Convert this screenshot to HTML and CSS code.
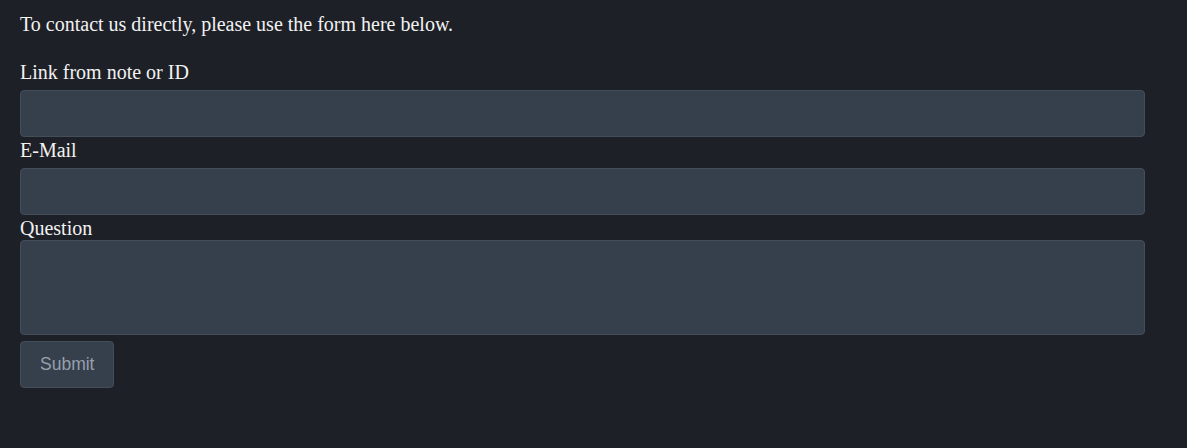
FILE: index.html
```html
<!DOCTYPE html>
<html lang="en">
<head>
<meta charset="utf-8">
<title>Contact</title>
<link rel="stylesheet" href="styles.css">
</head>
<body>
<div class="page">
  <p class="intro">To contact us directly, please use the form here below.</p>
  <form class="form">
    <label class="label" for="link">Link from note or ID</label>
    <input class="field" id="link" type="text">
    <label class="label" for="mail">E-Mail</label>
    <input class="field" id="mail" type="email">
    <label class="label label-tight" for="q">Question</label>
    <textarea class="field area" id="q"></textarea>
    <button class="submit" type="button">Submit</button>
  </form>
</div>
</body>
</html>
```
FILE: styles.css
```css
html, body {
  margin: 0;
  background: #1e2027;
}
.page {
  padding: 13px 42px 0 20px;
  font-family: "Liberation Serif", "Times New Roman", serif;
  font-size: 20px;
  line-height: 22px;
  color: #f2f2f2;
}
.intro {
  margin: 0 0 26px;
}
.form {
  display: flex;
  flex-direction: column;
  align-items: flex-start;
}
.label {
  display: block;
  margin: 0 0 7px;
}
.label-tight {
  margin-bottom: 1px;
}
.field {
  display: block;
  box-sizing: border-box;
  width: 100%;
  height: 47px;
  margin: 0 0 2px;
  background: #363f4c;
  border: 1px solid #444d5a;
  border-radius: 4px;
  color: #e5e7eb;
  font: inherit;
  padding: 8px 12px;
}
.area {
  height: 95px;
  resize: none;
  margin-bottom: 6px;
}
.submit {
  box-sizing: border-box;
  height: 47px;
  padding: 0 19px;
  background: #363f4c;
  border: 1px solid #444d5a;
  border-radius: 4px;
  color: #96a0ad;
  font-family: "Liberation Sans", Arial, sans-serif;
  font-size: 17.5px;
}
```
